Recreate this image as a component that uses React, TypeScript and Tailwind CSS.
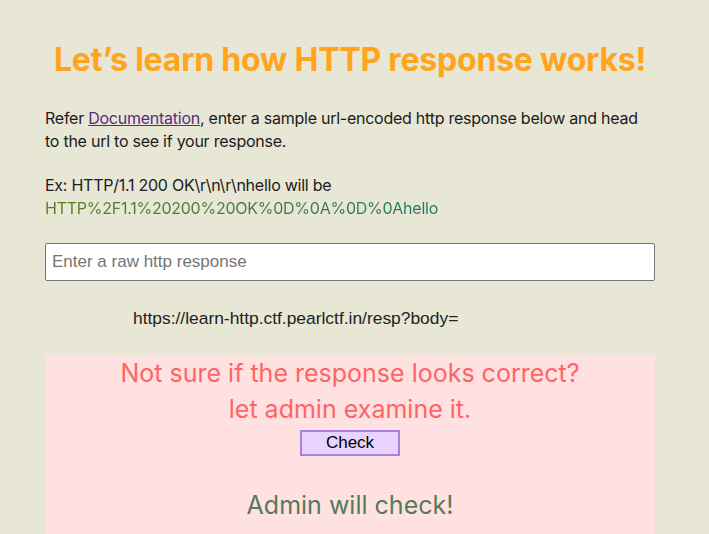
import React, { useState } from "react";

const App: React.FC = () => {
  const [resp, setResp] = useState("");
  const [checked] = useState(true);

  return (
    <div
      className="min-h-[534px] bg-[#e8e6d5] text-[#1c1b1b]"
      style={{ fontFamily: "Inter, 'Noto Sans', sans-serif" }}
    >
      <div className="w-[610px] ml-[45px] pt-[40px]">
        {/* Heading */}
        <h1 className="text-center text-[32px] leading-[40px] font-bold text-[#ffa41b] tracking-[-0.2px]">
          Let’s learn how HTTP response works!
        </h1>

        {/* Intro */}
        <p className="mt-[27px] text-[16px] leading-[23px] tracking-[-0.25px]">
          Refer{" "}
          <a href="#" className="underline text-[#5b2a86]">
            Documentation
          </a>
          , enter a sample url-encoded http response below and head to the url
          to see if your response.
        </p>

        <p className="mt-[21px] text-[16px] leading-[23px] tracking-[-0.25px]">
          Ex: HTTP/1.1 200 OK\r\n\r\nhello will be
          <br />
          <span className="bg-gradient-to-r from-[#5a7d14] to-[#1d7a64] bg-clip-text text-transparent">
            HTTP%2F1.1%20200%20OK%0D%0A%0D%0Ahello
          </span>
        </p>

        {/* Input */}
        <input
          value={resp}
          onChange={(e) => setResp(e.target.value)}
          placeholder="Enter a raw http response"
          className="mt-[23px] block w-full h-[38px] bg-white border border-[#767676] rounded-[2px] px-[6px] text-[17px] placeholder:text-[#757575] outline-none"
          style={{ fontFamily: "'Liberation Sans', Arial, sans-serif" }}
        />

        <div
          className="mt-[28px] pl-[88px] text-[17.4px] leading-[18px] text-[#222]"
          style={{ fontFamily: "'Liberation Sans', Arial, sans-serif" }}
        >
          https://learn-http.ctf.pearlctf.in/resp?body=
        </div>

        {/* Admin check */}
        <div className="mt-[28px] bg-[#ffe1e1] pt-[3px] pb-[24px] flex flex-col items-center">
          <p className="text-[25px] leading-[30px] text-[#ff6464] text-center">
            Not sure if the response looks correct?
          </p>
          <p className="text-[25px] leading-[30px] text-[#ff6464] text-center mt-[6px]">
            let admin examine it.
          </p>
          <button
            className="mt-[6px] w-[100px] h-[26px] bg-[#e8d3ff] border-2 border-[#a97fdf] text-[17px] leading-[20px] text-black"
            style={{ fontFamily: "'Liberation Sans', Arial, sans-serif" }}
          >
            Check
          </button>
          {checked && (
            <p className="mt-[34px] text-[25px] leading-[30px] text-[#567a5c]">
              Admin will check!
            </p>
          )}
        </div>
      </div>
    </div>
  );
};

export default App;
